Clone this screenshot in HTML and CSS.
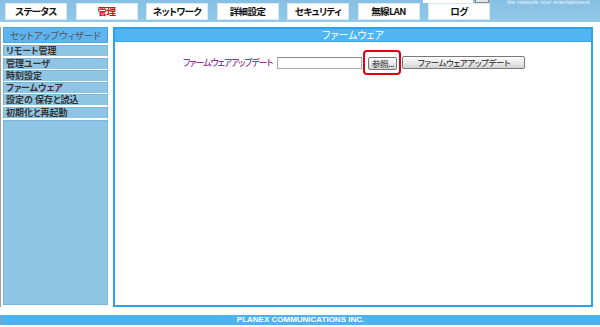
FILE: index.html
```html
<!DOCTYPE html>
<html lang="ja">
<head>
    <meta charset="UTF-8">
    <title>ファームウェア</title>
    <link rel="stylesheet" href="styles.css">
</head>
<body>
    <div id="menu">
        <div class="head-rest">
            <span class="head-search"></span>
            <span class="head-go"></span>
            <span class="head-slogan">the network your entertainment</span>
        </div>
        <a class="tab">ステータス</a>
        <a class="tab on">管理</a>
        <a class="tab">ネットワーク</a>
        <a class="tab">詳細設定</a>
        <a class="tab">セキュリティ</a>
        <a class="tab">無線LAN</a>
        <a class="tab">ログ</a>
    </div>
    <div id="page">
        <div id="side">
            <div class="side-head">セットアップウィザード</div>
            <a class="side-item">リモート管理</a>
            <a class="side-item">管理ユーザ</a>
            <a class="side-item">時刻設定</a>
            <a class="side-item">ファームウェア</a>
            <a class="side-item">設定の 保存と読込</a>
            <a class="side-item">初期化と再起動</a>
            <div class="side-fill"></div>
        </div>
        <div id="panel">
            <div class="panel-title">ファームウェア</div>
            <div class="form-row">
                <span class="label">ファームウェアアップデート</span>
                <span class="file"></span>
                <span class="mark"><button class="btn">参照...</button></span>
                <button class="btn wide">ファームウェアアップデート</button>
            </div>
        </div>
    </div>
    <div id="foot">PLANEX COMMUNICATIONS INC.</div>
</body>
</html>
```

FILE: styles.css
```css
body {
    margin: 0;
    width: 600px;
    font-family: "Noto Sans CJK JP", sans-serif;
    font-size: 10px;
    font-feature-settings: "palt";
}
#menu {
    /* タブ帯 */
    position: relative;
    height: 22px;
    background: linear-gradient(#86bfe2, #93c9e8);
    display: flex;
    align-items: flex-start;
    padding-left: 5px;
}
.head-rest span {
    position: absolute;
    top: 0;
}
.head-search {
    left: 423px;
    width: 50px;
    height: 3px;
    background: #fff;
}
.head-go {
    left: 475px;
    width: 12px;
    height: 2px;
    background: #e4e4e4;
    border: 1px solid #888;
    border-top: 0;
}
.head-slogan {
    left: 507px;
    font-family: "Liberation Sans", sans-serif;
    font-size: 6px;
    line-height: 4px;
    height: 4px;
    overflow: hidden;
    color: #e8f4fb;
    white-space: nowrap;
}
.tab {
    width: 60px;
    height: 15px;
    margin-top: 3px;
    margin-right: 8.5px;
    background: #fff;
    border: 1px solid #d6e9f6;
    text-align: center;
    line-height: 15px;
    font-size: 9.5px;
    letter-spacing: -0.6px;
    font-weight: bold;
    color: #111;
}
.tab.on {
    color: #e00000;
}
#page {
    display: flex;
    align-items: flex-start;
    margin-top: 5px;
    padding-left: 2px;
    border-left: 1px solid #a0a0a0;
    height: 280px;
}
#side {
    width: 105px;
    display: flex;
    flex-direction: column;
    gap: 0.3px;
}
.side-head {
    height: 14px;
    line-height: 14px;
    background: #5db4ee;
    border: 1px solid #47a8e8;
    text-align: center;
    color: #555;
    font-size: 9.5px;
    margin-bottom: 2px;
}
.side-item {
    height: 10px;
    line-height: 10px;
    padding-left: 2px;
    background: #8ec5e4;
    border: 1px solid #78b6dc;
    border-bottom-color: #fff;
    color: #333;
    font-weight: bold;
    font-size: 9px;
    overflow: hidden;
}
.side-fill {
    height: 183px;
    background: #8ec5e4;
    border: 1px solid #78b6dc;
    margin-top: 1px;
}
#panel {
    margin-left: 5px;
    width: 476px;
    height: 276px;
    border: 2px solid #2aa4ee;
    background: #fff;
}
.panel-title {
    height: 12px;
    line-height: 12px;
    background: #50b5f1;
    border-bottom: 1px solid #3ba8ee;
    color: #fff;
    text-align: center;
}
.form-row {
    display: flex;
    align-items: center;
    margin-top: 8px;
    padding-left: 68px;
}
.label {
    color: #800080;
    font-size: 9px;
    letter-spacing: -1.1px;
    margin-right: 5px;
}
.file {
    width: 83px;
    height: 10px;
    border: 1px solid #a8a8a8;
    border-top-color: #8a8a8a;
    background: #fff;
}
.mark {
    margin-left: 1px;
    padding: 3px 2px 3px 3px;
    border: 2px solid #e00010;
    border-radius: 4px;
}
.btn {
    height: 13px;
    padding: 0 2px;
    font-family: inherit;
    font-size: 8.5px;
    font-feature-settings: "palt";
    letter-spacing: -0.4px;
    line-height: 11px;
    color: #222;
    border: 1px solid #777;
    border-radius: 2px;
    background: linear-gradient(#fdfdfd, #e6e6e6 60%, #d2d2d2);
}
.mark .btn {
    width: 29px;
}
.btn.wide {
    width: 123px;
    margin-left: 1px;
}
#foot {
    margin-top: 8px;
    height: 10px;
    line-height: 10px;
    background: #4db3f0;
    border-left: 1px solid #a0a0a0;
    color: #fff;
    font-family: "Liberation Sans", sans-serif;
    font-weight: bold;
    font-size: 8px;
    text-align: center;
}
```
